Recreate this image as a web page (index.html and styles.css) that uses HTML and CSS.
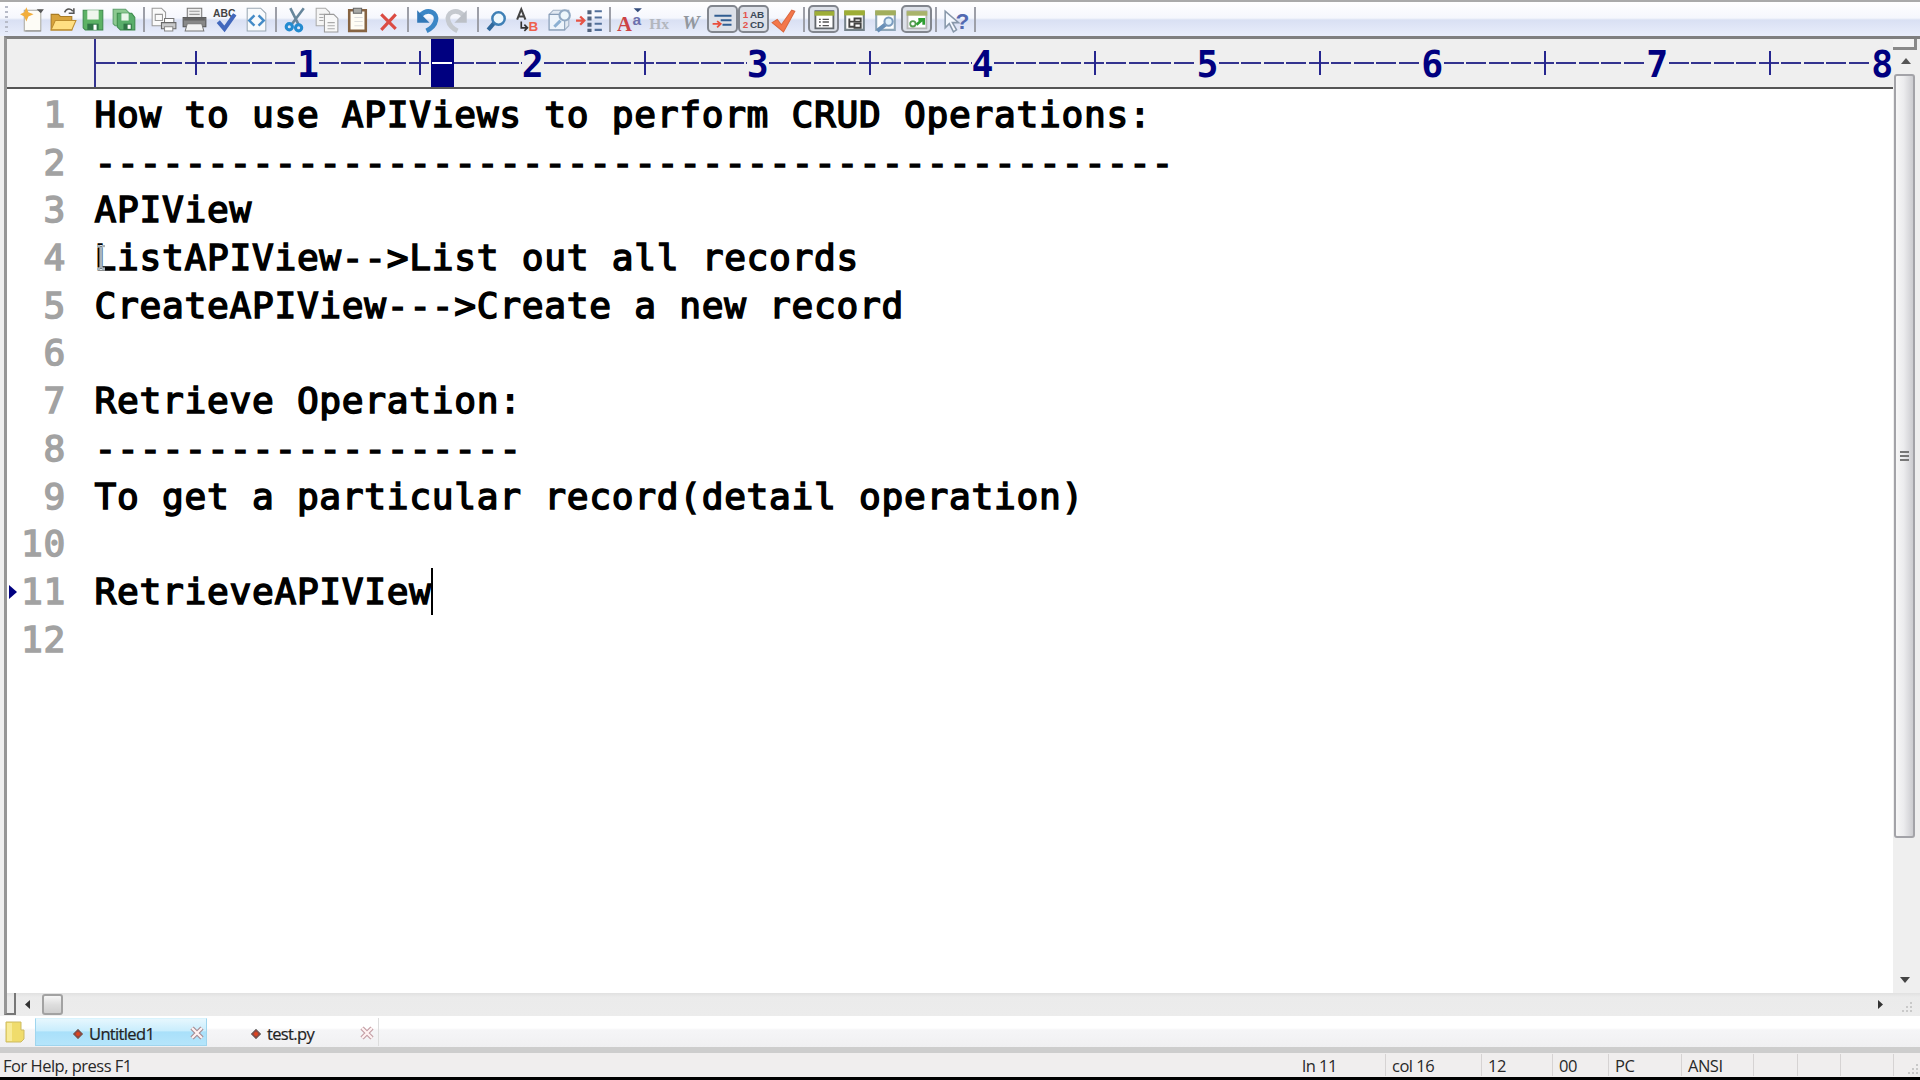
FILE: index.html
```html
<!DOCTYPE html>
<html lang="en">
<head>
<meta charset="utf-8">
<title>Untitled1</title>
<link rel="stylesheet" href="styles.css">
</head>
<body>
<div class="app">
<header class="toolbar">
<span class="grip"></span>
<svg class="ic" viewBox="0 0 30 30"><path d="M8 7h16v20H8z" fill="#fdfcf6" stroke="#aaa9a0"/><path d="M24 27H9" stroke="#888"/><path d="M20 6h7l-3 4z" fill="#555"/><path d="M10 4l2 5 5 2-5 2-2 5-2-5-4-2 4-2z" fill="#f2ae3c"/></svg>
<svg class="ic" viewBox="0 0 30 30"><path d="M4 11h7l2 2h11v13H4z" fill="#d7a33c" stroke="#a97c25"/><path d="M8 17h20l-4 9H4z" fill="#ffdf83" stroke="#bd8d2f"/><path d="M17 9c2-4 6-4 8-1m1-3v5h-5" fill="none" stroke="#555" stroke-width="1.5"/></svg>
<svg class="ic" viewBox="0 0 30 30"><path d="M5 7h19v19H7l-2-2z" fill="#5cb265" stroke="#3c8b4b"/><path d="M9 7h11v9H9z" fill="#eef6ed"/><path d="M9 20h11v6H9z" fill="#2f7545"/><path d="M15 21h3v5h-3z" fill="#fff"/></svg>
<svg class="ic" viewBox="0 0 30 30"><path d="M4 6h12l6 6v10H6l-2-2z" fill="#8cc990" stroke="#5da06c"/><path d="M8 10h14l3 4v12H11l-3-3z" fill="#5aae6b" stroke="#3c8b4b"/><path d="M12 10h7v7h-7z" fill="#eaf6e9"/><path d="M14 20h8v6h-8z" fill="#2f7545"/><path d="M18 21h3v4h-3z" fill="#fff"/></svg>
<i class="sep"></i>
<svg class="ic" viewBox="0 0 30 30"><path d="M4 5h9l4 4v13H4z" fill="#fafafa" stroke="#999"/><path d="M7 11h7v6H7z" fill="none" stroke="#999"/><path d="M16 15h9v4h-9z" fill="#fff" stroke="#777"/><path d="M13 19h14v6H13z" fill="#c8c9ca" stroke="#686868"/><path d="M16 23h8v4h-8z" fill="#fff" stroke="#888"/></svg>
<svg class="ic" viewBox="0 0 30 30"><path d="M8 5h14v10H8z" fill="#eee" stroke="#777"/><path d="M10 8h10m-10 3h10" stroke="#999"/><path d="M4 14h22v9H4z" fill="#888" stroke="#555"/><path d="M5 14h20v3H5z" fill="#666"/><path d="M8 20h14l2 7H6z" fill="#f3f3f3" stroke="#777"/></svg>
<svg class="ic" viewBox="0 0 30 30"><text x="3" y="14" class="lb abc">ABC</text><path d="M8 18l6 7L24 11" fill="none" stroke="#4268bd" stroke-width="4"/></svg>
<svg class="ic" viewBox="0 0 30 30"><path d="M6 5h13l5 5v17H6z" fill="#f8fafc" stroke="#9aa8b4"/><path d="M13 12l-5 5 5 5m4-10l5 5-5 5" fill="none" stroke="#448bc7" stroke-width="2.4"/></svg>
<i class="sep"></i>
<svg class="ic" viewBox="0 0 30 30"><path d="M10 5l8 16M23 5L11 21" stroke="#66869c" stroke-width="2.500"/><circle cx="9" cy="23" r="3" fill="none" stroke="#248bd0" stroke-width="3"/><circle cx="18" cy="24" r="3" fill="none" stroke="#248bd0" stroke-width="3"/></svg>
<svg class="ic" viewBox="0 0 30 30"><path d="M5 5h9l4 4v13H5z" fill="#f5f5f5" stroke="#aaa"/><path d="M13 11h9l4 4v13H13z" fill="#f8f8f8" stroke="#999"/><path d="M8 11h5m-5 3h4m-4 3h4m4 2h7m-7 3h7m-7 3h7" stroke="#aaa"/></svg>
<svg class="ic" viewBox="0 0 30 30"><path d="M7 7h16v20H7z" fill="#fffdf5" stroke="#876443" stroke-width="2.500"/><path d="M11 5h8v5h-8z" fill="#a9aaa6" stroke="#666"/><path d="M12 14h8m-8 4h8m-8 4h8" stroke="#ddd"/></svg>
<svg class="ic" viewBox="0 0 30 30"><path d="M8 11l14 14M22 11L8 26" stroke="#db4b43" stroke-width="3"/></svg>
<i class="sep"></i>
<svg class="ic" viewBox="0 0 30 30"><path d="M8 12C16 4 25 10 23 17c-1 5-5 8-9 10" fill="none" stroke="#3b86c6" stroke-width="4.500"/><path d="M5 7v12h12z" fill="#3278b8"/></svg>
<svg class="ic" viewBox="0 0 30 30"><path d="M20 12C12 4 3 10 5 17c1 5 5 8 9 10" fill="none" stroke="#c5c9cf" stroke-width="4.500"/><path d="M23 7v12H11z" fill="#bcc0c7"/></svg>
<i class="sep"></i>
<svg class="ic" viewBox="0 0 30 30"><path d="M12 19l-6 7" stroke="#31699d" stroke-width="4"/><circle cx="16" cy="15" r="6" fill="#eef8fd" stroke="#3f80b6" stroke-width="2.400"/></svg>
<svg class="ic" viewBox="0 0 30 30"><path d="M4 16L8 6l4 10M5 13h6" fill="none" stroke="#444" stroke-width="2"/><path d="M8 18v6h6m-3-3l3 3-3 3" fill="none" stroke="#333" stroke-width="1.600"/><text x="15" y="27" class="lb red">B</text></svg>
<svg class="ic" viewBox="0 0 30 30"><path d="M9 7h15v15l-4 4H5V11z" fill="#e1e9f2" stroke="#9fb0c4"/><path d="M5 11h15v15H5z" fill="#edf4fb" stroke="#879db7"/><path d="M16 17l-6 6" stroke="#8bb0d2" stroke-width="3"/><circle cx="20" cy="12" r="5" fill="#eef7fc" stroke="#91a9c3" stroke-width="2"/></svg>
<svg class="ic" viewBox="0 0 30 30"><path d="M1 17h7m-3-4l4 4-4 4" fill="none" stroke="#e65345" stroke-width="2.200"/><path d="M14 7v21" stroke="#53647f" stroke-width="4" stroke-dasharray="4 2"/><path d="M19 8h7m-7 6h7m-7 6h7m-7 6h7" stroke="#53709b" stroke-width="2"/></svg>
<i class="sep"></i>
<svg class="ic" viewBox="0 0 30 30"><text x="3" y="27" class="serif">A</text><text x="18" y="21" class="small-a">a</text><path d="M19 5h8l-4 4z" fill="#344d7c"/></svg>
<svg class="ic" viewBox="0 0 30 30"><text x="4" y="25" class="hx">Hx</text></svg>
<svg class="ic" viewBox="0 0 30 30"><text x="6" y="25" class="word">W</text></svg>
<span class="toggle"><svg class="ic" viewBox="0 0 30 30"><path d="M4 22h9m-4-3l4 3-4 4" fill="none" stroke="#e94f3c" stroke-width="2"/><path d="M6 13h19M13 18h12M15 23h10" stroke="#315d91" stroke-width="2.200"/></svg></span>
<span class="toggle"><svg class="ic" viewBox="0 0 30 30"><text x="3" y="16" class="mini r">1</text><text x="3" y="27" class="mini r">2</text><text x="11" y="16" class="mini">AB</text><text x="11" y="27" class="mini">CD</text></svg></span>
<svg class="ic" viewBox="0 0 30 30"><path d="M3 19l5-3 4 5L22 7l3 1-11 20z" fill="#f4774b" stroke="#d9673f"/></svg>
<i class="sep"></i>
<span class="toggle"><svg class="ic" viewBox="0 0 30 30"><path d="M6 8h20v19H6z" fill="#fff" stroke="#62676b" stroke-width="2"/><path d="M5 8h22v5H5z" fill="#9eae36"/><path d="M10 17h2m2 0h7m-11 3h2m2 0h7m-11 4h2m2 0h7" stroke="#555" stroke-width="1.500"/></svg></span>
<svg class="ic" viewBox="0 0 30 30"><path d="M6 9h18v17H6z" fill="#fff" stroke="#75828a" stroke-width="2"/><path d="M5 7h20v5H5z" fill="#9eae36"/><path d="M10 15v9m0-6h5m-5 5h5m0-8h6v3h-6zm0 5h6v4h-6z" fill="none" stroke="#444" stroke-width="1.800"/></svg>
<svg class="ic" viewBox="0 0 30 30"><path d="M6 9h18v17H6z" fill="#fff" stroke="#8fa6b8" stroke-width="2"/><path d="M5 7h20v5H5z" fill="#a2ae5d"/><path d="M16 20l-9 7" stroke="#6990b7" stroke-width="4"/><circle cx="18" cy="18" r="4" fill="#e0f0fb" stroke="#7b9cbf" stroke-width="2"/></svg>
<span class="toggle"><svg class="ic" viewBox="0 0 30 30"><path d="M5 8h21v19H5z" fill="#fff" stroke="#b5b5b5" stroke-width="2"/><path d="M4 8h23v5H4z" fill="#a9b36b"/><circle cx="11" cy="22" r="3" fill="none" stroke="#559d51" stroke-width="2"/><path d="M15 23l7-6m-5 0h6v6" fill="none" stroke="#2f9e32" stroke-width="3"/></svg></span>
<i class="sep"></i>
<svg class="ic" viewBox="0 0 30 30"><path d="M5 8v16l4-4 4 8 3-2-4-7h6z" fill="#f5f9ff" stroke="#8898aa" stroke-width="1.500"/><text x="15" y="25" class="q">?</text></svg>
<i class="sep"></i>
</header>
<main class="frame">
<section class="work">
<div class="ruler">
<div class="unit"><b>1</b></div><div class="unit current"><i></i><b>2</b></div><div class="unit"><b>3</b></div><div class="unit"><b>4</b></div><div class="unit"><b>5</b></div><div class="unit"><b>6</b></div><div class="unit"><b>7</b></div><div class="unit"><b>8</b></div>
</div>
<div class="editor">
<div class="line"><span class="num">1</span><span class="code">How to use APIViews to perform CRUD Operations:</span></div>
<div class="line"><span class="num">2</span><span class="code">------------------------------------------------</span></div>
<div class="line"><span class="num">3</span><span class="code">APIView</span></div>
<div class="line"><span class="num">4</span><span class="code">ListAPIView--&gt;List out all records</span><svg class="ibeam" viewBox="0 0 10 26"><path d="M1 1h3l1 1 1-1h3M5 2v21M1 24h3l1-1 1 1h3" fill="none" stroke="#dfe6ea" stroke-width="3"/><path d="M1 1h3l1 1 1-1h3M5 2v21M1 24h3l1-1 1 1h3" fill="none" stroke="#77838b"/></svg></div>
<div class="line"><span class="num">5</span><span class="code">CreateAPIView---&gt;Create a new record</span></div>
<div class="line"><span class="num">6</span></div>
<div class="line"><span class="num">7</span><span class="code">Retrieve Operation:</span></div>
<div class="line"><span class="num">8</span><span class="code">-------------------</span></div>
<div class="line"><span class="num">9</span><span class="code">To get a particular record(detail operation)</span></div>
<div class="line"><span class="num">10</span></div>
<div class="line active"><span class="num">11</span><span class="code">RetrieveAPIVIew</span><span class="caret"></span></div>
<div class="line"><span class="num">12</span></div>
</div>
</section>
<aside class="vscroll"><span class="split"></span><svg class="up" viewBox="0 0 10 6"><path d="M0 6l5-6 5 6z"/></svg><div class="vthumb"><i></i><i></i><i></i></div><svg class="down" viewBox="0 0 10 6"><path d="M0 0h10L5 6z"/></svg></aside>
</main>
<div class="hscroll"><span class="hsplit"></span><svg class="left" viewBox="0 0 5 9"><path d="M5 0v9L0 4.500z"/></svg><span class="hthumb"></span><svg class="right" viewBox="0 0 5 9"><path d="M0 0v9l5-4.500z"/></svg><svg class="resize" viewBox="0 0 12 12"><path d="M9 1h2v2H9zM5 5h2v2H5zM9 5h2v2H9zM1 9h2v2H1zM5 9h2v2H5zM9 9h2v2H9z"/></svg></div>
<nav class="tabs">
<svg class="doc" viewBox="0 0 22 22"><path d="M2 1h15v8h3v9l-3 3H2z" fill="#f0dc6c" stroke="#cdbb62"/><path d="M3 2h5v18H3z" fill="#f8eb98"/></svg>
<div class="tab selected"><svg class="dot" viewBox="0 0 12 12"><path d="M6 1l5 5-5 5-5-5z" fill="#8a4b45" stroke="#888"/><circle cx="6" cy="6" r="2" fill="#e0441f"/></svg><span class="name">Untitled1</span><svg class="x" viewBox="0 0 14 14"><path d="M2 2l10 10M12 2L2 12" stroke="#a58c94" stroke-width="4.500"/><path d="M2 2l10 10M12 2L2 12" stroke="#fff2f2" stroke-width="2.200"/></svg></div>
<div class="tab second"><svg class="dot" viewBox="0 0 12 12"><path d="M6 1l5 5-5 5-5-5z" fill="#8a4b45" stroke="#888"/><circle cx="6" cy="6" r="2" fill="#e0441f"/></svg><span class="name">test.py</span><svg class="x" viewBox="0 0 14 14"><path d="M2 2l10 10M12 2L2 12" stroke="#c39da4" stroke-width="4.500"/><path d="M2 2l10 10M12 2L2 12" stroke="#fff2f2" stroke-width="2.200"/></svg></div>
</nav>
<footer class="status"><span class="help">For Help, press F1</span><span class="c1">ln 11</span><span class="c2">col 16</span><span class="c3">12</span><span class="c4">00</span><span class="c5">PC</span><span class="c6">ANSI</span><span class="c7"></span><span class="c8"></span><span class="c9"></span><svg class="resize" viewBox="0 0 12 12"><path d="M9 1h2v2H9zM5 5h2v2H5zM9 5h2v2H9zM1 9h2v2H1zM5 9h2v2H5zM9 9h2v2H9z"/></svg></footer>
</div>
</body>
</html>
```
FILE: styles.css
```css
* { box-sizing: border-box; }
body { margin: 0; background: #000; overflow: hidden; }
.app { width: 1920px; height: 1077px; display: flex; flex-direction: column; background: #efefef; font-family: "Open Sans", "Noto Sans", sans-serif; }
.toolbar { height: 36px; flex: none; display: flex; align-items: center; padding-bottom: 1px; border-top: 2px solid #aaa; background: linear-gradient(#fff 0, #f5f7fd 16px, #d9e0f3 18px, #dfe5f6 24px, #e9eefb 34px); }
.grip { width: 3px; height: 26px; margin: 0 7.5px 0 5px; background: repeating-linear-gradient(#b7bbc8 0 2px, transparent 2px 5px); }
.ic { width: 31px; height: 31px; flex: none; display: block; overflow: visible; }
.sep { width: 8px; height: 25px; flex: none; margin-top: 1px; background: linear-gradient(90deg, transparent 3px, #9d9fa8 3px 5px, transparent 5px); }
.toggle { width: 31px; height: 28px; flex: none; display: flex; align-items: center; justify-content: center; margin-top: 1px; border: 2px solid #82868e; border-radius: 5px; background: #dde1e9; }
.toggle .ic { width: 27px; height: 27px; margin-top: -3px; }
.lb { font: bold 13px "Liberation Sans", sans-serif; }
.abc { font-size: 10px; fill: #444; }
.red { fill: #ee604c; }
.serif { font: bold 20px "Liberation Serif", serif; fill: #cc4345; }
.small-a { font: bold 15px "Liberation Sans", sans-serif; fill: #6c70ad; }
.hx { font: bold 15px "Liberation Serif", serif; fill: #b3b7be; }
.word { font: italic bold 19px "Liberation Serif", serif; fill: #92979e; }
.mini { font: bold 11px "Liberation Sans", sans-serif; fill: #3a4858; }
.mini.r { fill: #e4534c; }
.q { font: bold 22px "Liberation Sans", sans-serif; fill: #5269b1; }
.frame { height: 957px; flex: none; display: flex; margin-left: 4px; border-left: 3px solid #969696; border-top: 3px solid #7f7f7f; }
.work { width: 1886px; flex: none; display: flex; flex-direction: column; background: #fff; }
.ruler { height: 50px; flex: none; display: flex; overflow: hidden; padding-left: 87.500px; background: #efefef; border-bottom: 2px solid #555; font: bold 37.36px "DejaVu Sans Mono", monospace; color: #000080; }
.unit { position: relative; width: 224.9px; height: 48px; flex: none; display: flex; align-items: center; justify-content: flex-end; background: linear-gradient(#26268f, #26268f) 100px 12px / 2px 24px no-repeat, repeating-linear-gradient(90deg, #33338f 0 20px, transparent 20px 22.49px) 0 23px / 100% 2px no-repeat; }
.unit:first-child { box-shadow: -1px 0 #33338f, inset 1px 0 #33338f; }
.unit b { width: 22.5px; height: 48px; line-height: 51px; background: #efefef; text-align: center; font-size: 36.5px; text-indent: -.5px; }
.current i { position: absolute; left: 112px; top: 0; width: 22.5px; height: 48px; background: linear-gradient(#fff, #fff) 1px 23px / 20px 2px no-repeat, #000080; }
.editor { padding-top: 2px; flex: 1; font: 36.2px/47.7px "DejaVu Sans Mono", monospace; letter-spacing: .7px; -webkit-text-stroke: 1.5px currentColor; color: #000; }
.line { position: relative; display: flex; height: 47.7px; white-space: pre; }
.num { width: 59px; margin-right: 28.500px; text-align: right; color: #a2a2a2; }
.ibeam { position: absolute; left: 89px; top: 11px; width: 10px; height: 26px; }
.caret { width: 2px; height: 47px; margin-left: -1px; background: #000; }
.active::before { content: ""; position: absolute; left: 2px; top: 17px; border-left: 8px solid #000080; border-top: 7px solid transparent; border-bottom: 7px solid transparent; }
.vscroll { flex: 1; display: flex; flex-direction: column; align-items: center; background: #efefef; }
.split { width: 24px; height: 11px; margin-right: 3px; border-right: 3px solid #888; border-bottom: 3px solid #888; flex: none; background: #f3f3f3; }
.up { width: 10px; height: 6px; margin: 8px 1px 10px 0; fill: #555; flex: none; }
.vthumb { width: 21px; height: 764px; margin-right: 5px; flex: none; display: flex; flex-direction: column; align-items: center; justify-content: center; gap: 2px; border: 2px solid #a3a3a8; border-radius: 3px; background: linear-gradient(90deg, #f7f7f7, #ececee 45%, #ccccd0); }
.vthumb i { width: 9px; height: 2px; background: #777; }
.down { width: 10px; height: 6px; margin: auto 3px 10px 0; fill: #444; flex: none; }
.hscroll { height: 23px; flex: none; display: flex; align-items: center; margin-left: 4px; padding-bottom: 1px; background: linear-gradient(#e1e1e1, #ebebeb 4px, #ececec); }
.hsplit { width: 12px; height: 22px; align-self: flex-start; border-left: 3px solid #969696; border-right: 2px solid #777; border-bottom: 2px solid #777; }
.left { width: 5px; height: 9px; margin-left: 9px; fill: #333; }
.hthumb { width: 21px; height: 21px; margin-left: 12px; border: 2px solid #a2a2a2; border-radius: 3px; background: linear-gradient(#f6f6f6, #dedede 50%, #cfcfcf); }
.right { width: 5px; height: 9px; margin-left: auto; fill: #333; }
.hscroll .resize { margin: 6px 7px 0 18px; }
.resize { width: 12px; height: 12px; fill: #c9c9c9; }
.tabs { height: 31px; flex: none; display: flex; background: linear-gradient(#fff 0 12px, #f5f5f7 14px, #f0f0f2 100%); }
.doc { width: 22px; height: 22px; margin: 5px 9px 0 4px; }
.tab { width: 172px; height: 28px; margin-top: 2px; display: flex; align-items: center; padding: 0 2px 0 36px; border-right: 1px solid #ddd; font-size: 16.5px; color: #222; }
.tab.second { padding: 0 4px 0 43px; }
.tab.selected { border: 1px solid #9fd5ee; border-top-color: #d8f3fd; background: linear-gradient(#e6f7fe, #c9edfd 45%, #a9e0fa 50%, #b5e5fb); }
.dot { width: 12px; height: 12px; margin-top: 3px; flex: none; }
.name { margin-left: 5px; letter-spacing: -0.65px; line-height: 26px; margin-top: 4px; -webkit-text-stroke: .2px #222; }
.x { width: 14px; height: 14px; margin: 1px 0 0 auto; flex: none; }
.status { flex: 1; display: flex; align-items: center; border-top: 6px solid #cdcdcd; background: #f0eeee; font-size: 16.5px; letter-spacing: -0.5px; color: #292929; }
.status span { height: 22px; line-height: 24px; border-right: 1px solid #d6d3d3; padding-left: 6px; white-space: nowrap; }
.status .help { width: 1296px; padding-left: 3px; border: 0; }
.status .c1 { width: 90px; } .status .c2 { width: 96px; } .status .c3 { width: 71px; } .status .c4 { width: 56px; }
.status .c5 { width: 73px; } .status .c6 { width: 72px; } .status .c7 { width: 44px; } .status .c8 { width: 43px; } .status .c9 { width: 53px; }
.status .resize { margin: 8px 0 0 13px; }
```
